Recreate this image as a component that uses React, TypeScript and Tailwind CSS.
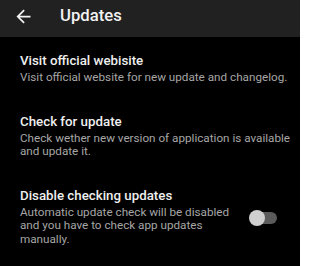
import React from "react";

function Toggle() {
  return (
    <div className="relative w-[28px] h-[16px] flex items-center shrink-0">
      <div className="absolute left-[3px] right-0 h-[12px] rounded-full bg-[#5b5b5b]" />
      <div className="absolute left-0 w-[16px] h-[16px] rounded-full bg-[#cfcfcf]" />
    </div>
  );
}

function Row({ title, children, toggle }: { title: string; children: React.ReactNode; toggle?: boolean }) {
  return (
    <div className="flex items-center pl-[20px] pr-[10px] py-[14px]">
      <div className="flex-1 min-w-0">
        <div className="text-[13.3px] leading-[18px] font-medium text-[#efefef]">{title}</div>
        <div className="mt-[1px] text-[11.7px] leading-[13.5px] text-[#a6a6a6] whitespace-nowrap">{children}</div>
      </div>
      {toggle && (
        <div className="mr-[13px] mt-[4px]">
          <Toggle />
        </div>
      )}
    </div>
  );
}

export default function App() {
  return (
    <div
      className="w-[300px] h-[266px] bg-black overflow-hidden"
      style={{ fontFamily: "Roboto, 'Noto Sans', sans-serif" }}
    >
      <div className="h-[37px] bg-[#212121] flex items-start">
        <div className="h-[32px] flex items-center w-full">
          <svg
            width="21"
            height="21"
            viewBox="0 0 24 24"
            className="ml-[12.5px] shrink-0"
            fill="#f2f2f2"
          >
            <path d="M20 11H7.83l5.59-5.59L12 4l-8 8 8 8 1.41-1.41L7.83 13H20v-2z" />
          </svg>
          <span className="ml-[26.5px] text-[16.7px] font-medium text-[#f2f2f2] leading-none">Updates</span>
        </div>
      </div>
      <div className="pt-[1px]">
        <Row title="Visit official webisite">Visit official website for new update and changelog.</Row>
        <Row title="Check for update">
          Check wether new version of application is available
          <br />
          and update it.
        </Row>
        <Row title="Disable checking updates" toggle>
          Automatic update check will be disabled
          <br />
          and you have to check app updates
          <br />
          manually.
        </Row>
      </div>
    </div>
  );
}
